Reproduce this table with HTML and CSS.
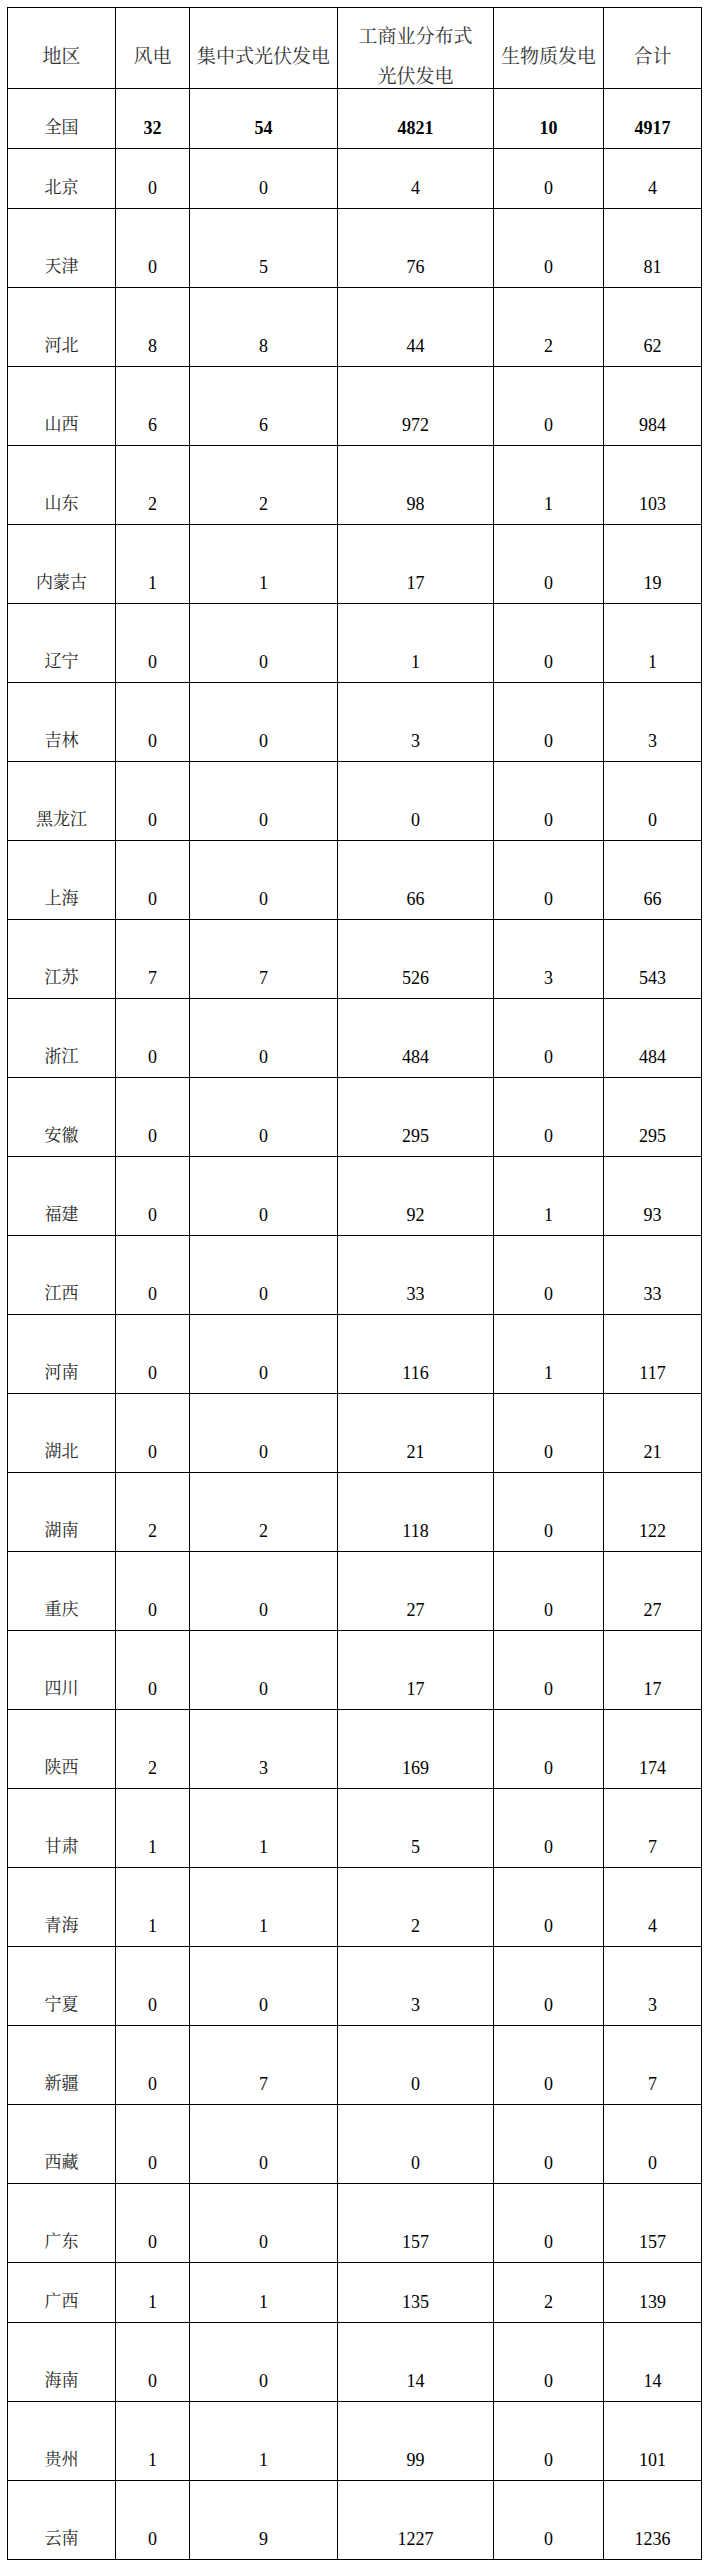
FILE: index.html
```html
<!DOCTYPE html>
<html lang="zh-CN">
<head>
<meta charset="utf-8">
<title>地区统计表</title>
<link rel="stylesheet" href="styles.css">
</head>
<body>
<div class="page">
<table class="grid">
<colgroup>
<col class="c1"><col class="c2"><col class="c3"><col class="c4"><col class="c5"><col class="c6">
</colgroup>
<thead>
<tr class="head">
<th>地区</th><th>风电</th><th>集中式光伏发电</th><th><span class="hl">工商业分布式</span><span class="hl">光伏发电</span></th><th>生物质发电</th><th>合计</th>
</tr>
</thead>
<tbody>
<tr class="short total"><td class="name">全国</td><td>32</td><td>54</td><td>4821</td><td>10</td><td>4917</td></tr>
<tr class="short"><td class="name">北京</td><td>0</td><td>0</td><td>4</td><td>0</td><td>4</td></tr>
<tr class="tall"><td class="name">天津</td><td>0</td><td>5</td><td>76</td><td>0</td><td>81</td></tr>
<tr class="tall"><td class="name">河北</td><td>8</td><td>8</td><td>44</td><td>2</td><td>62</td></tr>
<tr class="tall"><td class="name">山西</td><td>6</td><td>6</td><td>972</td><td>0</td><td>984</td></tr>
<tr class="tall"><td class="name">山东</td><td>2</td><td>2</td><td>98</td><td>1</td><td>103</td></tr>
<tr class="tall"><td class="name">内蒙古</td><td>1</td><td>1</td><td>17</td><td>0</td><td>19</td></tr>
<tr class="tall"><td class="name">辽宁</td><td>0</td><td>0</td><td>1</td><td>0</td><td>1</td></tr>
<tr class="tall"><td class="name">吉林</td><td>0</td><td>0</td><td>3</td><td>0</td><td>3</td></tr>
<tr class="tall"><td class="name">黑龙江</td><td>0</td><td>0</td><td>0</td><td>0</td><td>0</td></tr>
<tr class="tall"><td class="name">上海</td><td>0</td><td>0</td><td>66</td><td>0</td><td>66</td></tr>
<tr class="tall"><td class="name">江苏</td><td>7</td><td>7</td><td>526</td><td>3</td><td>543</td></tr>
<tr class="tall"><td class="name">浙江</td><td>0</td><td>0</td><td>484</td><td>0</td><td>484</td></tr>
<tr class="tall"><td class="name">安徽</td><td>0</td><td>0</td><td>295</td><td>0</td><td>295</td></tr>
<tr class="tall"><td class="name">福建</td><td>0</td><td>0</td><td>92</td><td>1</td><td>93</td></tr>
<tr class="tall"><td class="name">江西</td><td>0</td><td>0</td><td>33</td><td>0</td><td>33</td></tr>
<tr class="tall"><td class="name">河南</td><td>0</td><td>0</td><td>116</td><td>1</td><td>117</td></tr>
<tr class="tall"><td class="name">湖北</td><td>0</td><td>0</td><td>21</td><td>0</td><td>21</td></tr>
<tr class="tall"><td class="name">湖南</td><td>2</td><td>2</td><td>118</td><td>0</td><td>122</td></tr>
<tr class="tall"><td class="name">重庆</td><td>0</td><td>0</td><td>27</td><td>0</td><td>27</td></tr>
<tr class="tall"><td class="name">四川</td><td>0</td><td>0</td><td>17</td><td>0</td><td>17</td></tr>
<tr class="tall"><td class="name">陕西</td><td>2</td><td>3</td><td>169</td><td>0</td><td>174</td></tr>
<tr class="tall"><td class="name">甘肃</td><td>1</td><td>1</td><td>5</td><td>0</td><td>7</td></tr>
<tr class="tall"><td class="name">青海</td><td>1</td><td>1</td><td>2</td><td>0</td><td>4</td></tr>
<tr class="tall"><td class="name">宁夏</td><td>0</td><td>0</td><td>3</td><td>0</td><td>3</td></tr>
<tr class="tall"><td class="name">新疆</td><td>0</td><td>7</td><td>0</td><td>0</td><td>7</td></tr>
<tr class="tall"><td class="name">西藏</td><td>0</td><td>0</td><td>0</td><td>0</td><td>0</td></tr>
<tr class="tall"><td class="name">广东</td><td>0</td><td>0</td><td>157</td><td>0</td><td>157</td></tr>
<tr class="short"><td class="name">广西</td><td>1</td><td>1</td><td>135</td><td>2</td><td>139</td></tr>
<tr class="tall"><td class="name">海南</td><td>0</td><td>0</td><td>14</td><td>0</td><td>14</td></tr>
<tr class="tall"><td class="name">贵州</td><td>1</td><td>1</td><td>99</td><td>0</td><td>101</td></tr>
<tr class="tall"><td class="name">云南</td><td>0</td><td>9</td><td>1227</td><td>0</td><td>1236</td></tr>
</tbody>
</table>
</div>
</body>
</html>
```
FILE: styles.css
```css
html, body {
  margin: 0;
  padding: 0;
  background: #fff;
}
.page {
  padding: 7px 0 0 7px;
}
.grid {
  border-collapse: collapse;
  table-layout: fixed;
  width: 694px;
  font-family: "Liberation Serif", "Noto Serif CJK SC", "Noto Sans CJK SC", serif;
  color: #000;
}
.c1 { width: 108px; }
.c2 { width: 74px; }
.c3 { width: 148px; }
.c4 { width: 156px; }
.c5 { width: 110px; }
.c6 { width: 98px; }
.grid th,
.grid td {
  border: 1px solid #000;
  padding: 0;
  text-align: center;
}
.head { height: 81px; }
.grid th {
  font-weight: normal;
  font-size: 19px;
  line-height: 20px;
  color: #333;
  vertical-align: middle;
  padding-top: 18px;
  white-space: nowrap;
}
.hl { display: block; }
.hl + .hl { margin-top: 20px; }
.grid td {
  font-size: 18px;
  line-height: 40px;
  vertical-align: bottom;
}
.grid td.name {
  font-size: 17px;
  color: #222;
}
.short { height: 60px; }
.tall { height: 79px; }
.total td { font-weight: bold; }
.total td.name { font-weight: normal; }
```
